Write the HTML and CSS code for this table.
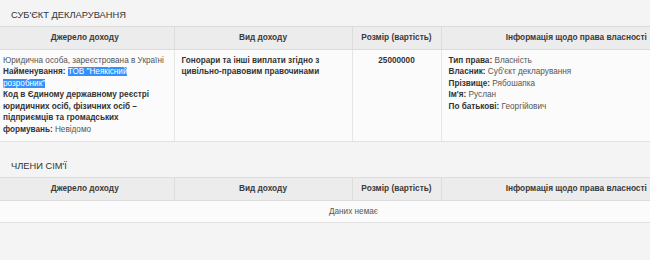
FILE: index.html
```html
<!DOCTYPE html>
<html lang="uk">
<head>
<meta charset="utf-8">
<link rel="stylesheet" href="styles.css">
</head>
<body>
<div class="page">
  <section class="section">
    <h2 class="section-title">СУБ'ЄКТ ДЕКЛАРУВАННЯ</h2>
    <table class="decl-table">
      <colgroup>
        <col class="c1"><col class="c2"><col class="c3"><col class="c4">
      </colgroup>
      <thead>
        <tr>
          <th>Джерело доходу</th>
          <th>Вид доходу</th>
          <th>Розмір (вартість)</th>
          <th>Інформація щодо права власності</th>
        </tr>
      </thead>
      <tbody>
        <tr>
          <td class="left">Юридична особа, зареєстрована в Україні<br>
            <b>Найменування:</b> <span class="sel">ТОВ "Неякісний розробник"</span><br>
            <b>Код в Єдиному державному реєстрі юридичних осіб, фізичних осіб – підприємців та громадських формувань:</b> Невідомо</td>
          <td class="left"><b>Гонорари та інші виплати згідно з цивільно-правовим правочинами</b></td>
          <td class="center"><b>25000000</b></td>
          <td class="left"><b>Тип права:</b> Власність<br>
            <b>Власник:</b> Суб'єкт декларування<br>
            <b>Прізвище:</b> Рябошапка<br>
            <b>Ім'я:</b> Руслан<br>
            <b>По батькові:</b> Георгійович</td>
        </tr>
      </tbody>
    </table>
  </section>
  <section class="section">
    <h2 class="section-title">ЧЛЕНИ СІМ'Ї</h2>
    <table class="decl-table">
      <colgroup>
        <col class="c1"><col class="c2"><col class="c3"><col class="c4">
      </colgroup>
      <thead>
        <tr>
          <th>Джерело доходу</th>
          <th>Вид доходу</th>
          <th>Розмір (вартість)</th>
          <th>Інформація щодо права власності</th>
        </tr>
      </thead>
      <tbody>
        <tr>
          <td class="empty" colspan="4">Даних немає</td>
        </tr>
      </tbody>
    </table>
  </section>
</div>
</body>
</html>
```
FILE: styles.css
```css
html, body {
  margin: 0;
  padding: 0;
  background: #f4f4f4;
  overflow: hidden;
}
body {
  font-family: "Liberation Sans", Arial, sans-serif;
  font-size: 8.2px;
  color: #555;
  width: 650px;
  height: 260px;
}
.page {
  width: 715px;
  margin-left: -4px;
}
.section + .section {
  margin-top: 9px;
}
.section-title {
  margin: 0;
  padding: 8px 0 4px 15px;
  font-size: 9.3px;
  line-height: 14px;
  font-weight: normal;
  color: #333;
}
.decl-table {
  width: 715px;
  border-collapse: collapse;
  table-layout: fixed;
}
.c1 { width: 178px; }
.c2 { width: 178px; }
.c3 { width: 89px; }
.c4 { width: 270px; }
.decl-table th {
  background: #ececec;
  color: #3a3a3a;
  font-weight: bold;
  font-size: 8.3px;
  line-height: 11.5px;
  padding: 5px 5px;
  text-align: center;
  white-space: nowrap;
  border-top: 1px solid #dcdcdc;
  border-bottom: 1px solid #dcdcdc;
  border-left: 1px solid #dcdcdc;
}
.decl-table td {
  background: #fbfbfb;
  line-height: 11.5px;
  padding: 5px 7px 6px;
  vertical-align: top;
  border-bottom: 1px solid #e2e2e2;
  border-left: 1px solid #e6e6e6;
}
.decl-table th:first-child,
.decl-table td:first-child {
  border-left: none;
}
.decl-table b {
  color: #333;
}
.left { text-align: left; }
.center { text-align: center; }
.sel {
  background: #3390ff;
  color: #fff;
}
.decl-table td.empty {
  text-align: center;
  padding: 5px 7px;
}
```
